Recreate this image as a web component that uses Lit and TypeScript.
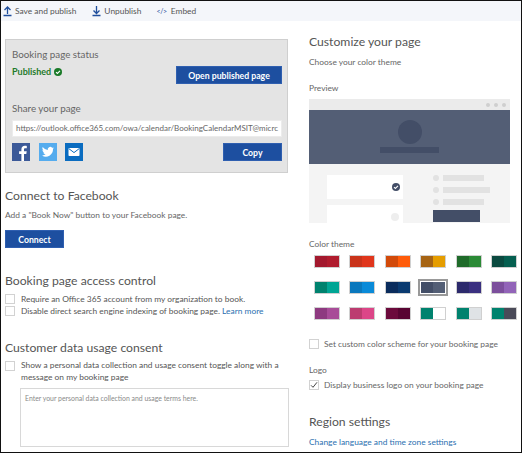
import { LitElement, html, css, svg } from 'lit';
import { customElement } from 'lit/decorators.js';

const SWATCHES = [
  ['#a3192e', '#b01c2e'], ['#c9331a', '#e0361c'], ['#d24a0a', '#ff5c0a'], ['#a66414', '#e59d00'], ['#1f6b2a', '#2b8a36'], ['#0b4a40', '#055f50'],
  ['#00826e', '#00a594'], ['#0a78bd', '#0a8ad8'], ['#0a2c5c', '#0a3a70'], ['#434e67', '#535e75'], ['#2c2a6c', '#3a3080'], ['#7c4f9c', '#9264b8'],
  ['#8e3a80', '#a84c98'], ['#bc3c70', '#dc4688'], ['#6c0a3c', '#580432'], ['#00826e', '#ffffff'], ['#00826e', '#dfe3e6'], ['#00826e', '#4a4a58'],
];

@customElement('app-root')
export class AppRoot extends LitElement {
  static styles = css`
    :host {
      display: block;
      width: 522px;
      height: 453px;
      box-sizing: border-box;
      overflow: hidden;
      background: #fff;
      border: 1px solid #111;
      font-family: Lato, 'Open Sans', sans-serif;
      font-size: 8.4px;
      color: #555;
    }
    .toolbar {
      display: flex;
      align-items: center;
      height: 20px;
      padding-left: 2px;
      background: #f4f6fa;
      font-size: 8.4px;
      color: #555;
    }
    .tool { display: flex; align-items: center; gap: 3px; margin-right: 15px; }
    .tool:first-child { margin-right: 16px; }
    .tool svg { display: block; }
    .code { font-size: 7px; color: #1f4e9c; letter-spacing: -0.3px; margin-right: 1px; }
    .columns { display: flex; }
    .left { width: 283px; margin-left: 4px; flex: none; }
    .right { margin-left: 21px; width: 205px; flex: none; }
    .panel {
      box-sizing: border-box;
      height: 134px;
      margin-top: 18px;
      padding: 7px 5px 0 6px;
      background: #e4e4e4;
      border: 1px solid #cfcfcf;
      display: flex;
      flex-direction: column;
    }
    .panel h4 { margin: 0; font-size: 9.8px; font-weight: 400; line-height: 14px; color: #666; }
    .status { display: flex; justify-content: space-between; align-items: flex-start; margin-top: 3px; height: 37px; }
    .published { display: flex; align-items: center; gap: 3px; font-size: 9px; font-weight: 700; color: #1f7a2a; line-height: 14px; margin-top: 1px; }
    .btn {
      box-sizing: border-box;
      display: flex;
      align-items: center;
      justify-content: center;
      height: 18px;
      background: #1d4fa0;
      color: #fff;
      font-size: 8.7px;
      font-weight: 700;
      border: 1px solid #2f5fb0;
    }
    .open { width: 106px; margin-top: 2px; }
    .share { margin-top: 9px; }
    .url {
      box-sizing: border-box;
      height: 17px;
      margin-top: 5px;
      padding: 0 3px;
      background: #fff;
      border: 1px solid #ececec;
      font-size: 8px;
      line-height: 15px;
      color: #666;
      white-space: nowrap;
      overflow: hidden;
    }
    .share-row { display: flex; justify-content: space-between; align-items: center; margin-top: 6px; }
    .icons { display: flex; gap: 8.5px; }
    .icons svg { display: block; }
    .copy { width: 59px; }
    h2 { margin: 0; font-size: 12.2px; font-weight: 400; line-height: 18px; color: #555; }
    .fb { margin-top: 14px; }
    .fb p { margin: 4px 0 0; line-height: 13px; font-size: 8.4px; color: #666; }
    .connect { width: 59px; margin-top: 8px; }
    .access { margin-top: 24px; }
    .check { display: flex; gap: 6px; line-height: 12px; font-size: 8.4px; color: #555; }
    .check a { color: #2a6fb0; }
    .box {
      box-sizing: border-box;
      flex: none;
      width: 10px;
      height: 10px;
      margin-top: 1px;
      background: #fff;
      border: 1px solid #d2d2d2;
      display: flex;
      align-items: center;
      justify-content: center;
    }
    .access h2 + .check { margin-top: 3px; }
    .consent { margin-top: 22px; }
    .consent .check { margin-top: 3px; line-height: 11.5px; }
    .terms {
      box-sizing: border-box;
      height: 59px;
      margin: 5px 0 0 15px;
      width: 269px;
      padding: 3px 4px;
      border: 1px solid #d8d8d8;
      font-size: 6.9px;
      line-height: 12px;
      color: #8a8a8a;
    }
    .right h1 { margin: 12px 0 0; font-size: 12.2px; font-weight: 400; line-height: 18px; color: #555; }
    .choose { margin-top: 5px; font-size: 8.4px; line-height: 12px; color: #666; }
    .label { font-size: 8.4px; line-height: 12px; color: #666; }
    .preview-label { margin-top: 14px; }
    .preview {
      margin-top: 5px;
      width: 201px;
      height: 124px;
      overflow: hidden;
      background: #f4f4f4;
    }
    .chrome { display: flex; justify-content: flex-end; align-items: center; gap: 4px; height: 11px; padding-right: 4px; background: #ebebeb; }
    .chrome i { width: 4px; height: 4px; border-radius: 50%; background: #cfcfcf; }
    .hero { box-sizing: border-box; height: 54px; padding-top: 10px; display: flex; flex-direction: column; align-items: center; background: #535e75; }
    .avatar { width: 24px; height: 24px; border-radius: 50%; background: #434e67; }
    .name { width: 59px; height: 6px; margin-top: 3px; background: #434e67; }
    .pbody { display: flex; padding: 11px 0 0 18px; }
    .cards { width: 76px; display: flex; flex-direction: column; gap: 6px; }
    .card { height: 24px; background: #fff; display: flex; align-items: center; justify-content: flex-end; padding-right: 3px; flex: none; box-sizing: border-box; }
    .card i { width: 8px; height: 8px; border-radius: 50%; background: #eee; display: block; margin-right: 1px; }
    .plist { margin-left: 30px; display: flex; flex-direction: column; gap: 6px; }
    .pline { display: flex; align-items: center; gap: 4px; height: 6px; }
    .pline i { width: 6px; height: 6px; border-radius: 50%; background: #e2e2e2; }
    .pline b { height: 6px; background: #e2e2e2; display: block; }
    .pbtn { width: 47px; height: 12px; background: #434e67; margin-top: -1px; }
    .theme-label { margin-top: 15px; }
    .swatches { display: grid; grid-template-columns: repeat(6, 26px); column-gap: 9.4px; row-gap: 13px; margin: 5px 0 0 5px; }
    .swatch { box-sizing: border-box; height: 13px; display: flex; border: 1px solid #d0d0d0; }
    .swatch span { flex: 1; }
    .swatch.sel { outline: 2px solid #999; border: 1px solid #fff; }
    .custom { margin-top: 18px; gap: 5px; color: #666; }
    .logo { margin-top: 14px; }
    .logo .check { margin-top: 3px; gap: 5px; color: #666; }
    .right h3 { margin: 22px 0 0; font-size: 12.2px; font-weight: 400; line-height: 18px; color: #555; }
    .lang { margin-top: 5px; display: block; font-size: 8.4px; line-height: 12px; color: #2a6fb0; }
  `;

  private arrowIcon(down: boolean) {
    return html`<svg width="9" height="12" viewBox="0 0 9 12">
      ${down
        ? svg`<path d="M4.500 1v7M1.500 5.500 4.500 8.500 7.500 5.500M0.500 10.500h8" fill="none" stroke="#1f4e9c" stroke-width="1.300"/>`
        : svg`<path d="M4.500 9V2.500M1.500 5 4.500 2 7.500 5M0.500 10.500h8" fill="none" stroke="#1f4e9c" stroke-width="1.300"/>`}
    </svg>`;
  }

  render() {
    return html`
      <div class="toolbar">
        <div class="tool">${this.arrowIcon(false)}<span>Save and publish</span></div>
        <div class="tool">${this.arrowIcon(true)}<span>Unpublish</span></div>
        <div class="tool"><span class="code">&lt;/&gt;</span><span>Embed</span></div>
      </div>
      <div class="columns">
        <div class="left">
          <div class="panel">
            <h4>Booking page status</h4>
            <div class="status">
              <div class="published">Published
                <svg width="8" height="8" viewBox="0 0 8 8"><circle cx="4" cy="4" r="4" fill="#1a7a28"/><path d="M2 4.100 3.400 5.500 6 2.800" fill="none" stroke="#fff" stroke-width="1.100"/></svg>
              </div>
              <div class="btn open">Open published page</div>
            </div>
            <h4 class="share">Share your page</h4>
            <div class="url">https://outlook.office365.com/owa/calendar/BookingCalendarMSIT@micrc</div>
            <div class="share-row">
              <div class="icons">
                <svg width="18" height="18" viewBox="0 0 18 18"><rect width="18" height="18" fill="#3b5998"/><path d="M12 18v-7h2.300l.4-2.700H12V6.600c0-.8.3-1.300 1.400-1.300h1.400V2.900c-.3 0-1.100-.1-2-.1-2 0-3.400 1.200-3.400 3.500v2H7.100V11h2.300v7z" fill="#fff"/></svg>
                <svg width="18" height="18" viewBox="0 0 18 18"><rect width="18" height="18" fill="#55acee"/><path d="M15 5.200c-.4.200-.9.300-1.400.4.500-.3.900-.8 1.100-1.400-.5.300-1 .5-1.600.6a2.500 2.500 0 0 0-4.300 2.300C6.700 6.600 4.900 5.600 3.700 4.100c-.7 1.100-.3 2.600.8 3.300-.4 0-.8-.1-1.100-.3 0 1.200.9 2.200 2 2.500-.4.100-.7.100-1.100 0 .3 1 1.200 1.700 2.300 1.700A5 5 0 0 1 3 12.400 7.100 7.100 0 0 0 14 6.100c.4-.3.800-.5 1-.9z" fill="#fff"/></svg>
                <svg width="18" height="18" viewBox="0 0 18 18"><rect width="18" height="18" fill="#0a6cc0"/><rect x="3.500" y="5" width="11" height="8" rx="0.800" fill="#fff"/><path d="M3.800 5.600 9 9.600 14.200 5.600" fill="none" stroke="#0a6cc0" stroke-width="1"/></svg>
              </div>
              <div class="btn copy">Copy</div>
            </div>
          </div>
          <div class="fb">
            <h2>Connect to Facebook</h2>
            <p>Add a "Book Now" button to your Facebook page.</p>
            <div class="btn connect">Connect</div>
          </div>
          <div class="access">
            <h2>Booking page access control</h2>
            <div class="check"><span class="box"></span><span>Require an Office 365 account from my organization to book.</span></div>
            <div class="check"><span class="box"></span><span>Disable direct search engine indexing of booking page. <a>Learn more</a></span></div>
          </div>
          <div class="consent">
            <h2>Customer data usage consent</h2>
            <div class="check"><span class="box"></span><span>Show a personal data collection and usage consent toggle along with a<br>message on my booking page</span></div>
            <div class="terms">Enter your personal data collection and usage terms here.</div>
          </div>
        </div>
        <div class="right">
          <h1>Customize your page</h1>
          <div class="choose">Choose your color theme</div>
          <div class="label preview-label">Preview</div>
          <div class="preview">
            <div class="chrome"><i></i><i></i><i></i></div>
            <div class="hero"><div class="avatar"></div><div class="name"></div></div>
            <div class="pbody">
              <div class="cards">
                <div class="card"><svg width="8" height="8" viewBox="0 0 8 8"><circle cx="4" cy="4" r="4" fill="#434e67"/><path d="M2 4.100 3.400 5.500 6 2.800" fill="none" stroke="#fff" stroke-width="1.100"/></svg></div>
                <div class="card"><i></i></div>
              </div>
              <div class="plist">
                <div class="pline"><i></i><b style="width:41px"></b></div>
                <div class="pline"><i></i><b style="width:47px"></b></div>
                <div class="pline"><i></i><b style="width:41px"></b></div>
                <div class="pbtn"></div>
              </div>
            </div>
          </div>
          <div class="label theme-label">Color theme</div>
          <div class="swatches">
            ${SWATCHES.map(
              (s, i) => html`<div class="swatch ${i === 9 ? 'sel' : ''}"><span style="background:${s[0]}"></span><span style="background:${s[1]}"></span></div>`
            )}
          </div>
          <div class="check custom"><span class="box"></span><span>Set custom color scheme for your booking page</span></div>
          <div class="logo">
            <div class="label">Logo</div>
            <div class="check"><span class="box"><svg width="8" height="8" viewBox="0 0 8 8"><path d="M1 4.300 3 6.300 7 1.300" fill="none" stroke="#444" stroke-width="1"/></svg></span><span>Display business logo on your booking page</span></div>
          </div>
          <h3>Region settings</h3>
          <a class="lang">Change language and time zone settings</a>
        </div>
      </div>
    `;
  }
}
